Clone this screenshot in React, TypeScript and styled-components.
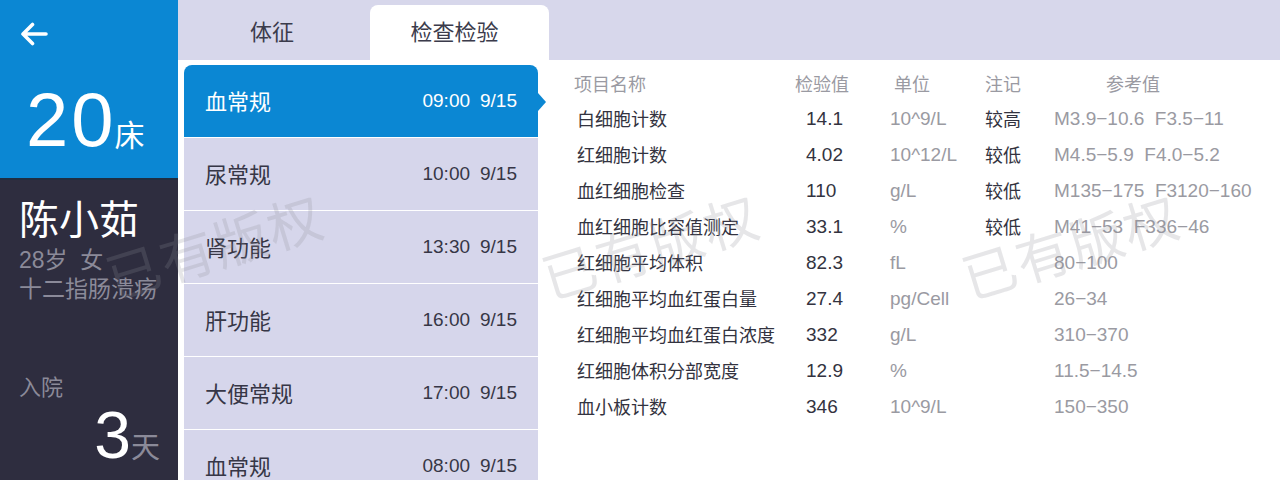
import React from "react";
import styled, { createGlobalStyle } from "styled-components";

const GlobalStyle = createGlobalStyle`
  html, body { margin: 0; padding: 0; background: #ffffff; }
  body { font-family: "Liberation Sans", "Noto Sans CJK SC", sans-serif; }
  * { box-sizing: border-box; }
`;

const Screen = styled.div`
  position: relative;
  display: flex;
  width: 1280px;
  height: 480px;
  overflow: hidden;
  background: #ffffff;
`;

const Sidebar = styled.aside`
  width: 178px;
  flex-shrink: 0;
  display: flex;
  flex-direction: column;
`;

const BedBlock = styled.div`
  height: 178px;
  flex-shrink: 0;
  background: #0b87d3;
  padding: 22px 0 0 20px;
  color: #ffffff;
`;

const BackButton = styled.div`
  width: 28px;
  height: 24px;
  display: flex;
`;

const BedRow = styled.div`
  display: flex;
  align-items: baseline;
  margin-top: 36px;
  margin-left: 6px;
`;

const BedNumber = styled.span`
  font-size: 76px;
  line-height: 1;
  letter-spacing: 3px;
`;

const BedUnit = styled.span`
  font-size: 30px;
  margin-left: -2px;
`;

const PatientBlock = styled.div`
  flex: 1;
  background: #2e2d3f;
  border-top: 2px solid #1f2d40;
  padding: 17px 0 0 19px;
  display: flex;
  flex-direction: column;
`;

const PatientName = styled.div`
  font-size: 40px;
  line-height: 46px;
  color: #ffffff;
`;

const PatientInfo = styled.div<{ $gap?: number }>`
  font-size: 23px;
  line-height: 29px;
  color: #8b8a99;
  white-space: pre;
  margin-top: ${(p) => p.$gap ?? 0}px;
`;

const AdmitLabel = styled.div`
  font-size: 22px;
  line-height: 28px;
  color: #8b8a99;
  margin-top: 70px;
`;

const AdmitRow = styled.div`
  display: flex;
  align-items: baseline;
  justify-content: flex-end;
  padding-right: 18px;
`;

const AdmitDays = styled.span`
  font-size: 66px;
  line-height: 1;
  color: #ffffff;
`;

const AdmitUnit = styled.span`
  font-size: 29px;
  color: #8b8a99;
`;

const Main = styled.main`
  flex: 1;
  min-height: 0;
  display: flex;
  flex-direction: column;
`;

const TabBar = styled.div`
  height: 60px;
  flex-shrink: 0;
  background: #d7d7eb;
  display: flex;
  align-items: flex-end;
`;

const Tab = styled.div<{ $active?: boolean; $width: number }>`
  width: ${(p) => p.$width}px;
  height: 55px;
  display: flex;
  align-items: center;
  justify-content: center;
  font-size: 22px;
  color: #3b3b4b;
  padding-bottom: 6px;
  padding-right: ${(p) => (p.$active ? 10 : 4)}px;
  background: ${(p) => (p.$active ? "#ffffff" : "transparent")};
  border-radius: 8px 8px 0 0;
`;

const Content = styled.div`
  flex: 1;
  min-height: 0;
  display: flex;
  padding: 5px 0 0 6px;
`;

const ExamList = styled.div`
  width: 354px;
  display: flex;
  flex-direction: column;
  gap: 1px;
  flex-shrink: 0;
`;

const ExamItem = styled.div<{ $active?: boolean }>`
  position: relative;
  height: 72px;
  flex-shrink: 0;
  display: flex;
  align-items: center;
  justify-content: space-between;
  padding: 0 21px;
  background: ${(p) => (p.$active ? "#0b87d3" : "#d6d6eb")};
  border-radius: ${(p) => (p.$active ? "8px 8px 0 0" : "0")};
  color: ${(p) => (p.$active ? "#ffffff" : "#363646")};

  &::after {
    content: "";
    display: ${(p) => (p.$active ? "block" : "none")};
    position: absolute;
    right: -8px;
    top: 28px;
    border-top: 9px solid transparent;
    border-bottom: 9px solid transparent;
    border-left: 8px solid #0b87d3;
  }
`;

const ExamName = styled.span`
  font-size: 22px;
  padding-bottom: 3px;
`;

const ExamTime = styled.span`
  font-size: 19px;
  display: flex;
  gap: 10px;
`;

const ResultTable = styled.div`
  margin-left: 36px;
  padding-top: 2px;
  display: grid;
  grid-template-columns: 221px 95px 95px 69px 1fr;
  grid-auto-rows: 36px;
  grid-template-rows: 34px;
  align-content: start;
  flex: 1;
`;

type Tone = "dark" | "light";

const Cell = styled.div<{ $tone: Tone; $pad?: number; $num?: boolean }>`
  display: flex;
  align-items: center;
  font-size: ${(p) => (p.$num ? 19 : 18)}px;
  padding-left: ${(p) => p.$pad ?? 0}px;
  padding-bottom: ${(p) => (p.$num ? 1 : 3)}px;
  color: ${(p) => (p.$tone === "dark" ? "#333340" : "#9a9aa2")};
  white-space: pre;
`;

const HeadCell = styled(Cell)`
  color: #9a9aa2;
`;

const Watermark = styled.div`
  position: absolute;
  inset: 0;
  pointer-events: none;
`;

const Mark = styled.span<{ $x: number }>`
  position: absolute;
  left: ${(p) => p.$x}px;
  top: 205px;
  font-size: 54px;
  letter-spacing: 2px;
  color: rgba(140, 140, 150, 0.22);
  transform: rotate(-17deg);
  transform-origin: center;
  white-space: nowrap;
`;

const exams = [
  { name: "血常规", time: "09:00", date: "9/15", active: true },
  { name: "尿常规", time: "10:00", date: "9/15" },
  { name: "肾功能", time: "13:30", date: "9/15" },
  { name: "肝功能", time: "16:00", date: "9/15" },
  { name: "大便常规", time: "17:00", date: "9/15" },
  { name: "血常规", time: "08:00", date: "9/15" },
];

const results = [
  ["白细胞计数", "14.1", "10^9/L", "较高", "M3.9−10.6  F3.5−11"],
  ["红细胞计数", "4.02", "10^12/L", "较低", "M4.5−5.9  F4.0−5.2"],
  ["血红细胞检查", "110", "g/L", "较低", "M135−175  F3120−160"],
  ["血红细胞比容值测定", "33.1", "%", "较低", "M41−53  F336−46"],
  ["红细胞平均体积", "82.3", "fL", "", "80−100"],
  ["红细胞平均血红蛋白量", "27.4", "pg/Cell", "", "26−34"],
  ["红细胞平均血红蛋白浓度", "332", "g/L", "", "310−370"],
  ["红细胞体积分部宽度", "12.9", "%", "", "11.5−14.5"],
  ["血小板计数", "346", "10^9/L", "", "150−350"],
];

export default function App() {
  return (
    <>
      <GlobalStyle />
      <Screen>
        <Sidebar>
          <BedBlock>
            <BackButton>
              <svg width="28" height="24" viewBox="0 0 28 24" fill="none">
                <path
                  d="M26 12H3M12.5 2.5L3 12l9.5 9.5"
                  stroke="#ffffff"
                  strokeWidth="3.6"
                  strokeLinecap="round"
                  strokeLinejoin="round"
                />
              </svg>
            </BackButton>
            <BedRow>
              <BedNumber>20</BedNumber>
              <BedUnit>床</BedUnit>
            </BedRow>
          </BedBlock>
          <PatientBlock>
            <PatientName>陈小茹</PatientName>
            <PatientInfo $gap={3}>{"28岁  女"}</PatientInfo>
            <PatientInfo>十二指肠溃疡</PatientInfo>
            <AdmitLabel>入院</AdmitLabel>
            <AdmitRow>
              <AdmitDays>3</AdmitDays>
              <AdmitUnit>天</AdmitUnit>
            </AdmitRow>
          </PatientBlock>
        </Sidebar>
        <Main>
          <TabBar>
            <Tab $width={192}>体征</Tab>
            <Tab $width={179} $active>
              检查检验
            </Tab>
          </TabBar>
          <Content>
            <ExamList>
              {exams.map((e, i) => (
                <ExamItem key={i} $active={e.active}>
                  <ExamName>{e.name}</ExamName>
                  <ExamTime>
                    <span>{e.time}</span>
                    <span>{e.date}</span>
                  </ExamTime>
                </ExamItem>
              ))}
            </ExamList>
            <ResultTable>
              <HeadCell $tone="light">项目名称</HeadCell>
              <HeadCell $tone="light">检验值</HeadCell>
              <HeadCell $tone="light" $pad={4}>单位</HeadCell>
              <HeadCell $tone="light">注记</HeadCell>
              <HeadCell $tone="light" $pad={52}>参考值</HeadCell>
              {results.map((r, i) => (
                <React.Fragment key={i}>
                  <Cell $tone="dark" $pad={3}>{r[0]}</Cell>
                  <Cell $tone="dark" $pad={11} $num>{r[1]}</Cell>
                  <Cell $tone="light" $num>{r[2]}</Cell>
                  <Cell $tone="dark">{r[3]}</Cell>
                  <Cell $tone="light" $num>{r[4]}</Cell>
                </React.Fragment>
              ))}
            </ResultTable>
          </Content>
        </Main>
        <Watermark>
          <Mark $x={102}>已有版权</Mark>
          <Mark $x={538}>已有版权</Mark>
          <Mark $x={958}>已有版权</Mark>
        </Watermark>
      </Screen>
    </>
  );
}
